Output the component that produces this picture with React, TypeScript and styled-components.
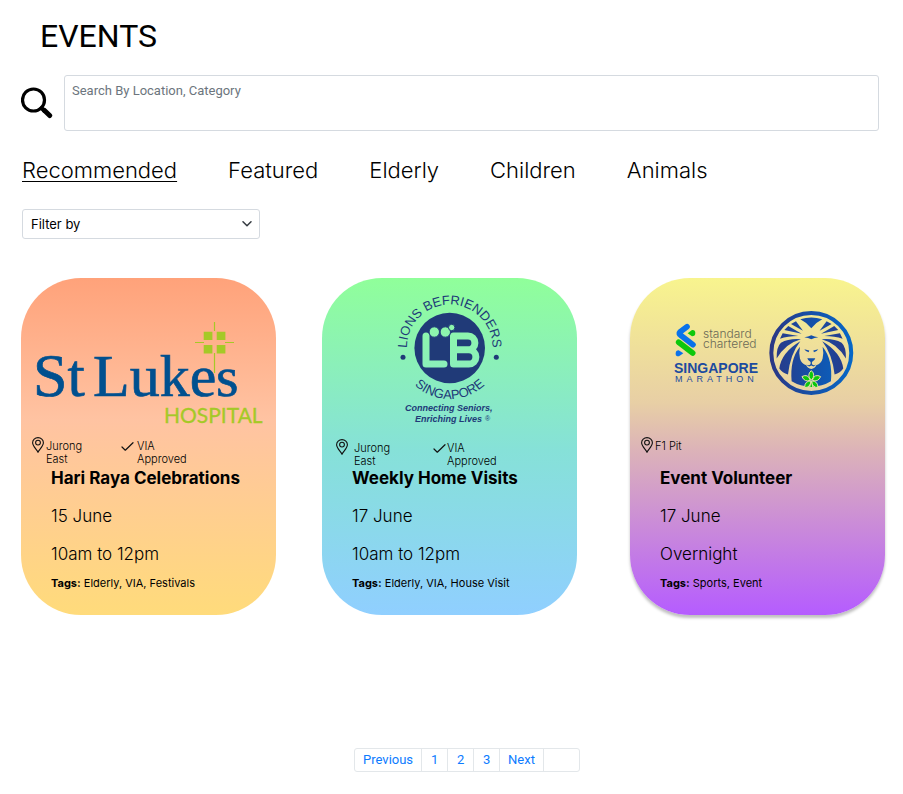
import React, { useState } from 'react';
import styled, { createGlobalStyle } from 'styled-components';

const GlobalStyle = createGlobalStyle`
  *, *::before, *::after { box-sizing: border-box; }
  body {
    margin: 0;
    background: #fff;
    color: #000;
    font-family: Inter, "Open Sans", sans-serif;
  }
`;

const Page = styled.main`
  padding: 16px 18px 22px 21px;
`;

const Heading = styled.h1`
  margin: 0 0 19px 19px;
  font: 400 32px/40px Roboto, sans-serif;
`;

const SearchRow = styled.form`
  display: flex;
  align-items: center;
  gap: 11px;
  padding-right: 6px;
`;

const SearchButton = styled.button`
  flex: none;
  width: 32px;
  height: 32px;
  padding: 0;
  border: 0;
  background: none;
  cursor: pointer;
  svg { display: block; }
`;

const SearchBox = styled.textarea`
  flex: 1;
  min-width: 0;
  height: 56px;
  padding: 6px 7px;
  border: 1px solid #d5dae0;
  border-radius: 3px;
  background: #fff;
  color: #212529;
  font: 400 13px/18px Roboto, sans-serif;
  resize: none;
  &::placeholder { color: #6c757d; opacity: 1; }
`;

const Tabs = styled.nav`
  display: flex;
  flex-wrap: wrap;
  gap: 8px 51px;
  margin-top: 25px;
  padding-left: 1px;
`;

const Tab = styled.a<{ $active?: boolean }>`
  color: #000;
  font-size: 22px;
  font-weight: 300;
  line-height: 28px;
  text-decoration: ${p => (p.$active ? 'underline' : 'none')};
  text-decoration-thickness: 1px;
  text-underline-offset: 3px;
`;

const FilterField = styled.div`
  display: grid;
  width: 238px;
  margin: 25px 0 39px 1px;
  align-items: center;
  > * { grid-area: 1 / 1; }
  svg { justify-self: end; margin-right: 8px; pointer-events: none; }
`;

const FilterSelect = styled.select`
  width: 100%;
  height: 30px;
  padding: 0 28px 0 8px;
  border: 1px solid #d5dae0;
  border-radius: 3px;
  appearance: none;
  background: #fff;
  color: #000;
  font: 400 13px/20px Inter, sans-serif;
`;

const Cards = styled.section`
  display: flex;
`;

const Card = styled.article<{ $fill: string; $gap: number; $raised?: boolean }>`
  flex: 1;
  min-width: 0;
  min-height: 337px;
  margin-left: ${p => p.$gap}px;
  border-radius: 60px;
  background: linear-gradient(${p => p.$fill});
  box-shadow: ${p => (p.$raised ? '0 3px 3px rgba(0, 0, 0, 0.25)' : 'none')};
`;

const Artwork = styled.svg`
  display: block;
  width: 100%;
  height: 158px;
`;

const Meta = styled.div<{ $left: number; $top: number }>`
  display: flex;
  height: 30px;
  padding: ${p => p.$top}px 0 0 ${p => p.$left}px;
`;

const MetaItem = styled.div<{ $width: number; $gap: number }>`
  display: flex;
  align-items: flex-start;
  gap: ${p => p.$gap}px;
  width: ${p => p.$width}px;
  font-size: 11px;
  font-weight: 300;
  line-height: 13px;
  svg { flex: none; }
  span { width: 50px; padding-top: 3px; }
`;

const Details = styled.div`
  padding: 0 16px 20px 30px;
`;

const CardTitle = styled.h2`
  margin: 0 0 14px;
  font-size: 17px;
  font-weight: 700;
  line-height: 24px;
`;

const Line = styled.p`
  margin: 0 0 14px;
  font-size: 17px;
  font-weight: 300;
  line-height: 24px;
`;

const Tags = styled.p`
  margin: -5px 0 0;
  font-size: 11px;
  line-height: 16px;
`;

const PagerNav = styled.nav`
  display: flex;
  justify-content: center;
  margin-top: 133px;
  padding-left: 28px;
`;

const Pager = styled.ul`
  display: flex;
  margin: 0;
  padding: 0;
  border: 1px solid #e3e7ea;
  border-radius: 3px;
  list-style: none;
`;

const PagerItem = styled.li`
  min-width: 26px;
  height: 22px;
  border-right: 1px solid #e3e7ea;
  text-align: center;
  &:last-child { width: 35px; border-right: 0; }
`;

const PagerLink = styled.a`
  display: block;
  padding: 0 8px;
  color: #0d7bff;
  font: 400 13px/22px Roboto, sans-serif;
  text-decoration: none;
`;

const SearchIcon = () => (
  <svg width="32" height="32" viewBox="0 0 32 32" fill="none" stroke="#000" strokeLinecap="round" aria-hidden="true">
    <circle cx="12.5" cy="13" r="11" strokeWidth="3.2" />
    <path d="M20.5 21l3 3" strokeWidth="4" />
    <path d="M23.500 23.500l5.200 5" strokeWidth="5" />
  </svg>
);

const ChevronIcon = () => (
  <svg width="10" height="8" viewBox="0 0 10 8" fill="none" stroke="#343a40" strokeWidth="1.5" strokeLinecap="round" strokeLinejoin="round" aria-hidden="true">
    <path d="M1 1.8l4 4 4-4" />
  </svg>
);

const PinIcon = () => (
  <svg width="12" height="16" viewBox="0 0 12 16" fill="none" stroke="#111" strokeWidth="1.1" aria-hidden="true">
    <path d="M6 15.2C4.6 12.5.6 9 .6 5.8a5.4 5.2 0 0 1 10.8 0C11.400 9 7.400 12.500 6 15.200z" />
    <circle cx="6" cy="5.6" r="2.4" />
  </svg>
);

const CheckIcon = () => (
  <svg width="13" height="18" viewBox="0 0 13 18" fill="none" stroke="#111" strokeWidth="1.2" strokeLinecap="round" strokeLinejoin="round" aria-hidden="true">
    <path d="M1 10l3.300 3.200L12 5.700" />
  </svg>
);

const StLukesLogo = () => (
  <Artwork viewBox="0 0 255 158" role="img" aria-label="St Luke's Hospital">
    <g fill="#00508f" stroke="#00508f" strokeWidth="0.7" fontFamily="'Liberation Serif', serif">
      <text x="12" y="118" fontSize="62">St</text>
      <text x="72" y="118" fontSize="60">Luke</text>
      <text x="195" y="118" fontSize="58">s</text>
    </g>
    <text x="143" y="145" fill="#a5c927" stroke="#a5c927" strokeWidth="0.3" fontFamily="Lato, sans-serif" fontSize="21">HOSPITAL</text>
    <path
      fill="#a5c927"
      d="M182.700 53.700h8.700v8.400h-8.700zM195.700 53.700h8.700v8.400h-8.700zM182.700 67h8.700v8.400h-8.700zM195.700 67h8.700v8.400h-8.700z"
    />
    <path stroke="#a5c927" strokeWidth="1.2" d="M193.500 44v9M193.500 75v20M174 64.500h9M204 64.500h9" />
  </Artwork>
);

const LionsLogo = () => (
  <Artwork viewBox="0 0 255 158" role="img" aria-label="Lions Befrienders Singapore">
    <defs>
      <mask id="lb-cut">
        <rect width="255" height="158" fill="#fff" />
        <g fill="none" stroke="#000" strokeWidth="7" strokeLinecap="round" strokeLinejoin="round">
          <path d="M104 58v28h18" />
          <path d="M131.500 58H146a6.800 6.800 0 0 1 0 13.800h-14.500M146 71.800h.8a7 7 0 0 1 0 14.200h-15.300V58" />
        </g>
        <g fill="#000" stroke="#fff" strokeWidth="1">
          <circle cx="112.300" cy="54" r="5.200" />
          <circle cx="123.300" cy="54" r="5.200" />
          <circle cx="129.700" cy="49.500" r="3.200" />
        </g>
      </mask>
      <path id="lb-top" d="M86 79A42.800 42.800 0 1 1 169.400 79" />
      <path id="lb-bottom" d="M76.700 70A51 51 0 0 0 178.700 70" />
    </defs>
    <g fill="#203a78">
      <circle cx="127.700" cy="70" r="35.300" mask="url(#lb-cut)" />
      <circle cx="81" cy="79.300" r="2.500" />
      <circle cx="174.300" cy="79.300" r="2.500" />
      <g fontFamily="'Liberation Sans', sans-serif" fontSize="13" textAnchor="middle">
        <text><textPath href="#lb-top" startOffset="50%">LIONS BEFRIENDERS</textPath></text>
        <text><textPath href="#lb-bottom" startOffset="50%">SINGAPORE</textPath></text>
      </g>
      <g fontFamily="'Liberation Sans', sans-serif" fontSize="9" fontWeight="700" fontStyle="italic">
        <text x="83" y="133">Connecting Seniors,</text>
        <text x="93" y="144">Enriching Lives</text>
      </g>
      <text x="163" y="143" fontFamily="'Liberation Sans', sans-serif" fontSize="7">®</text>
    </g>
  </Artwork>
);

const Rays = () => (
  <>
    <path d="M78 54l15-8 21 28z" />
    <path d="M58 72l12-12 40 23z" />
    <path d="M45 98l8-16 47 8q-32 1-55 8z" />
    <path d="M35 158q-1-36 13-48 24-13 60-10-46 12-73 58z" />
    <path d="M43 188q6-48 63-82-30 38-37 100-17-5-26-18z" />
  </>
);

const MarathonLogo = () => (
  <Artwork viewBox="0 0 255 158" role="img" aria-label="Standard Chartered Singapore Marathon">
    <defs>
      <linearGradient id="lion-blue" gradientUnits="userSpaceOnUse" x1="15" y1="0" x2="265" y2="0">
        <stop offset="0" stopColor="#2b3784" />
        <stop offset="0.500" stopColor="#1550a8" />
        <stop offset="1" stopColor="#0668c8" />
      </linearGradient>
    </defs>
    <g transform="translate(40 40) scale(0.333)" strokeLinecap="round" strokeLinejoin="round" fill="none">
      <path d="M51 26L30 42q-5 5 2 10l37 28" stroke="#0a72ea" strokeWidth="17" />
      <path d="M26 73l42 32" stroke="#0cc80c" strokeWidth="17" />
      <path d="M53 46l13-10q10-1 10 9 0 10-10 10z" fill="#0cc80c" />
      <path d="M40 106l-13 9q-10 1-10-8 0-10 9-10z" fill="#0a72ea" />
    </g>
    <g fill="#6a6957" fontFamily="Inter, sans-serif" fontSize="12" fontWeight="300">
      <text x="73" y="60">standard</text>
      <text x="73" y="70">chartered</text>
    </g>
    <g fill="#1c4b9f" fontFamily="'Liberation Sans', sans-serif">
      <text x="44" y="95" fontSize="14" fontWeight="700">SINGAPORE</text>
      <text x="45" y="104" fontSize="9" letterSpacing="4">MARATHON</text>
    </g>
    <g transform="translate(135 28) scale(0.333)" fill="url(#lion-blue)">
      <circle cx="139" cy="141" r="120" fill="none" stroke="url(#lion-blue)" strokeWidth="12" />
      <path d="M106 40q33-11 66 0-20 10-33 27-13-17-33-27z" />
      <Rays />
      <g transform="matrix(-1 0 0 1 278 0)"><Rays /></g>
      <path d="M118 94q12-1 21-6 9 5 21 6-12 1-21 6-9-5-21-6z" />
      <path d="M118 130l15 4-2 5q-8-1-13-9zM160 130l-15 4 2 5q8-1 13-9z" />
      <path d="M80 226q-6-66 25-104-4 18 0 36 4 16 19 20 4 10 15 11 11-1 15-11 15-4 19-20 4-18 0-36 31 38 25 104-26 16-59 16t-59-16z" />
      <path d="M127 157h24q-2 8-10 11v6q4 6 13 2-7 9-15 3-8 6-15-3 9 4 13-2v-6q-8-3-10-11z" />
      <g fill="#0cc80c" stroke="#e8e0a8" strokeWidth="3">
        <path d="M139 194q15 13 0 29-15-16 0-29z" />
        <path d="M111 212q18-10 25 11-17 7-25-11z" />
        <path d="M167 212q-18-10-25 11 17 7 25-11z" />
        <path d="M119 245q0-20 19-20-1 20-19 20z" />
        <path d="M159 245q0-20-19-20 1 20 19 20z" />
        <path d="M139 225l5 20h-10z" />
      </g>
    </g>
  </Artwork>
);

type EventInfo = {
  title: string;
  date: string;
  time: string;
  tags: string;
  place: string;
  approved: boolean;
  fill: string;
  gap: number;
  raised?: boolean;
  meta: { left: number; top: number; pinGap: number; placeWidth: number; checkGap: number };
  Logo: () => React.ReactElement;
};

const events: EventInfo[] = [
  {
    title: 'Hari Raya Celebrations', date: '15 June', time: '10am to 12pm', tags: 'Elderly, VIA, Festivals',
    place: 'Jurong East', approved: true, gap: 0,
    fill: '#ffa27a, #ffc3a2 42%, #ffdb7b',
    meta: { left: 11, top: 1, pinGap: 2, placeWidth: 89, checkGap: 3 }, Logo: StLukesLogo,
  },
  {
    title: 'Weekly Home Visits', date: '17 June', time: '10am to 12pm', tags: 'Elderly, VIA, House Visit',
    place: 'Jurong East', approved: true, gap: 46,
    fill: '#90ff9a, #86e1d8 51%, #90cfff',
    meta: { left: 14, top: 3, pinGap: 6, placeWidth: 97, checkGap: 1 }, Logo: LionsLogo,
  },
  {
    title: 'Event Volunteer', date: '17 June', time: 'Overnight', tags: 'Sports, Event',
    place: 'F1 Pit', approved: false, gap: 53, raised: true,
    fill: '#f8f48e, #e8cfa5 37%, #dcb3b8 51%, #b55cff',
    meta: { left: 11, top: 1, pinGap: 2, placeWidth: 89, checkGap: 3 }, Logo: MarathonLogo,
  },
];

const EventCard = ({ event }: { event: EventInfo }) => {
  const { meta, Logo } = event;
  return (
    <Card $fill={event.fill} $gap={event.gap} $raised={event.raised}>
      <Logo />
      <Meta $left={meta.left} $top={meta.top}>
        <MetaItem $width={meta.placeWidth} $gap={meta.pinGap}>
          <PinIcon />
          <span>{event.place}</span>
        </MetaItem>
        {event.approved && (
          <MetaItem $width={80} $gap={meta.checkGap}>
            <CheckIcon />
            <span>VIA Approved</span>
          </MetaItem>
        )}
      </Meta>
      <Details>
        <CardTitle>{event.title}</CardTitle>
        <Line>{event.date}</Line>
        <Line>{event.time}</Line>
        <Tags><strong>Tags:</strong> {event.tags}</Tags>
      </Details>
    </Card>
  );
};

const categories = ['Recommended', 'Featured', 'Elderly', 'Children', 'Animals'];
const pages = ['Previous', '1', '2', '3', 'Next'];

export default function App() {
  const [active, setActive] = useState(categories[0]);
  return (
    <>
      <GlobalStyle />
      <Page>
        <Heading>EVENTS</Heading>
        <SearchRow onSubmit={e => e.preventDefault()}>
          <SearchButton type="submit" aria-label="Search"><SearchIcon /></SearchButton>
          <SearchBox aria-label="Search events" placeholder="Search By Location, Category" />
        </SearchRow>
        <Tabs aria-label="Categories">
          {categories.map(name => (
            <Tab key={name} href={`#${name.toLowerCase()}`} $active={name === active} onClick={() => setActive(name)}>
              {name}
            </Tab>
          ))}
        </Tabs>
        <FilterField>
          <FilterSelect aria-label="Filter by" defaultValue="">
            <option value="">Filter by</option>
          </FilterSelect>
          <ChevronIcon />
        </FilterField>
        <Cards>
          {events.map(event => <EventCard key={event.title} event={event} />)}
        </Cards>
        <PagerNav aria-label="Pagination">
          <Pager>
            {pages.map(label => (
              <PagerItem key={label}><PagerLink href={`#page-${label.toLowerCase()}`}>{label}</PagerLink></PagerItem>
            ))}
            <PagerItem />
          </Pager>
        </PagerNav>
      </Page>
    </>
  );
}
